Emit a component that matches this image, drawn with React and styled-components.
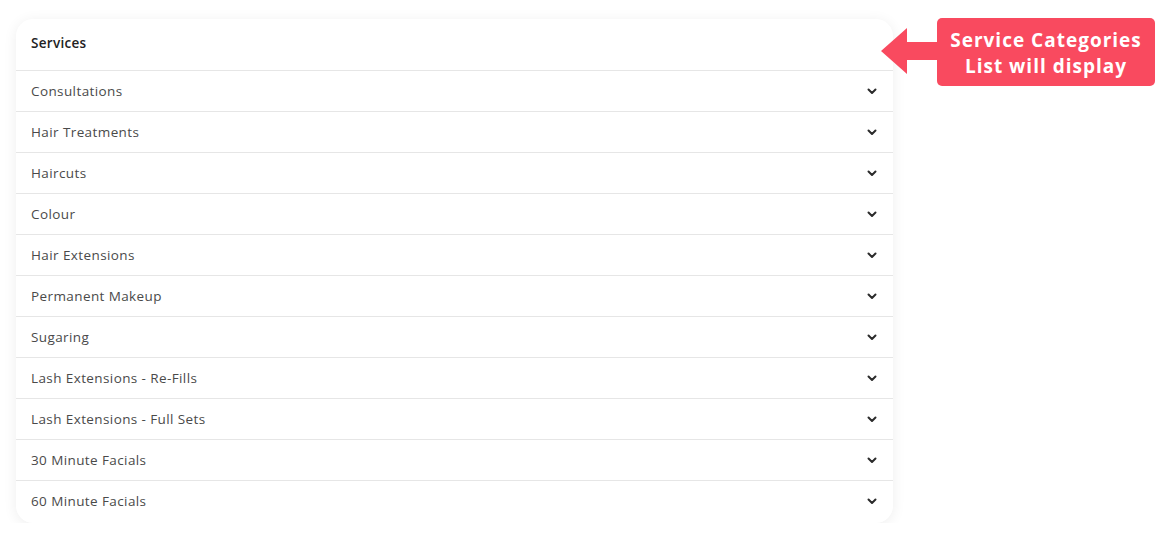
import styled, { createGlobalStyle } from "styled-components";

const categories = [
  "Consultations",
  "Hair Treatments",
  "Haircuts",
  "Colour",
  "Hair Extensions",
  "Permanent Makeup",
  "Sugaring",
  "Lash Extensions - Re-Fills",
  "Lash Extensions - Full Sets",
  "30 Minute Facials",
  "60 Minute Facials",
];

const Chevron = () => (
  <svg width="10" height="7" viewBox="0 0 10 7" fill="none">
    <path
      d="M1.5 1.5 5 5l3.5-3.5"
      stroke="#2b2b2b"
      strokeWidth="2"
      strokeLinecap="round"
      strokeLinejoin="round"
    />
  </svg>
);

const Arrow = () => (
  <svg width="56" height="48" viewBox="0 0 56 48">
    <path d="M0 23 26 0v14h30v18H26v14z" fill="#f94a5f" />
  </svg>
);

const App = () => {
  return (
    <>
      <GlobalStyle />
      <Page>
        <Card>
          <Header>Services</Header>
          {categories.map((name) => (
            <Row key={name}>
              <span>{name}</span>
              <Chevron />
            </Row>
          ))}
        </Card>
        <Callout>
          <Arrow />
          <Label>
            <Line>Service Categories</Line>
            <Line>List will display</Line>
          </Label>
        </Callout>
      </Page>
    </>
  );
};

export default App;

const GlobalStyle = createGlobalStyle`
  body {
    margin: 0;
    background: #fff;
    font-family: "Open Sans", "Liberation Sans", sans-serif;
  }
`;

const Page = styled.div`
  display: flex;
  align-items: flex-start;
  padding: 18px 0 0 16px;
`;

const Card = styled.div`
  width: 877px;
  margin-top: 1px;
  padding-bottom: 2px;
  background: #fff;
  border-radius: 17px;
  box-shadow: 0 2px 14px rgba(0, 0, 0, 0.07);
  overflow: hidden;
`;

const Header = styled.div`
  height: 48px;
  padding: 0 15px 3px;
  display: flex;
  align-items: center;
  font-size: 13.5px;
  font-weight: 600;
  color: #222;
  letter-spacing: 0.3px;
`;

const Row = styled.div`
  box-sizing: border-box;
  height: 41px;
  border-top: 1px solid #e6e6e6;
  display: flex;
  align-items: center;
  justify-content: space-between;
  padding: 0 16px 0 15px;
  font-size: 13.5px;
  color: #4a4a4a;
  letter-spacing: 0.4px;
`;

const Callout = styled.div`
  display: flex;
  align-items: center;
  margin-left: -12px;
`;

const Label = styled.div`
  width: 218px;
  height: 68px;
  padding-top: 2px;
  box-sizing: border-box;
  display: flex;
  flex-direction: column;
  align-items: center;
  justify-content: center;
  background: #f94a5f;
  border-radius: 5px;
  color: #fff;
  font-family: "Open Sans", "Liberation Sans", sans-serif;
  font-size: 19px;
  font-weight: 700;
  letter-spacing: 1px;
`;

const Line = styled.div`
  height: 26px;
  line-height: 26px;
  white-space: nowrap;
`;
